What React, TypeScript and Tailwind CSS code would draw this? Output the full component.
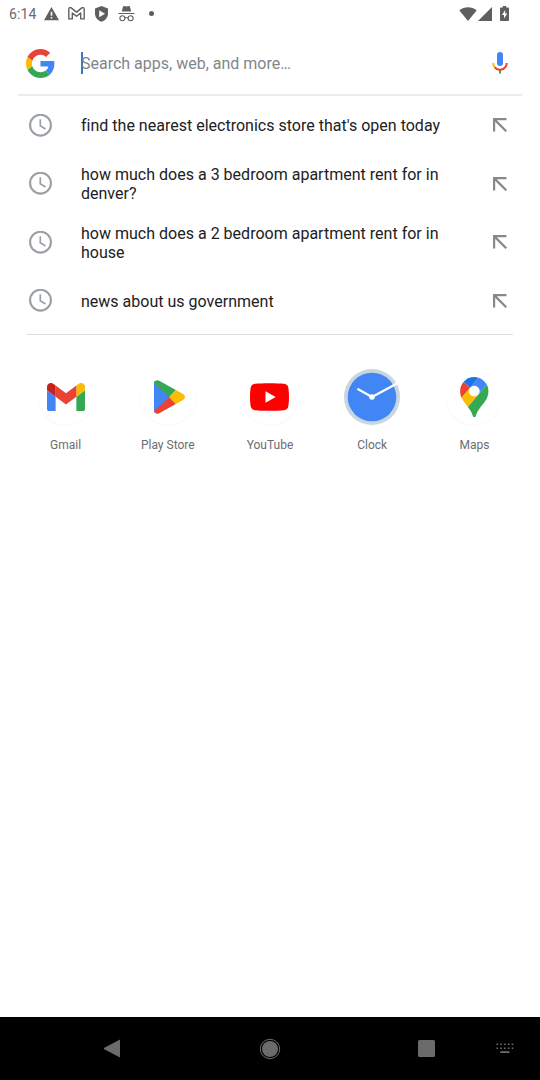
import type { ReactNode } from "react";

const suggestions = [
  "find the nearest electronics store that's open today",
  "how much does a 3 bedroom apartment rent for in denver?",
  "how much does a 2 bedroom apartment rent for in house",
  "news about us government",
];

function StatusBar() {
  return (
    <header className="flex h-[27px] shrink-0 items-center justify-between pl-[9px] pr-[30.5px] text-[#5f5f5f]">
      <div className="flex items-center">
        <span className="w-[35px] pt-px text-sm leading-[27px] tracking-[0.1px] text-[#6b6b6b]">6:14</span>
        <svg className="h-[14px] w-[15px]" viewBox="0 0 15 14" fill="currentColor">
          <path fillRule="evenodd" d="M7.5 0 15 13.2H0ZM6.7 4.8v4h1.6v-4ZM6.7 10v1.6h1.6V10Z" />
        </svg>
        <svg className="ml-[9px] h-[13px] w-[17px]" viewBox="0 0 17 13" fill="none" stroke="currentColor" strokeWidth="1.4" strokeLinejoin="round">
          <path d="M.8 11.9V2C.8.7 2.3.2 3.2.9l5.3 4.2L13.8.9c.9-.7 2.4-.2 2.4 1.1v9.9h-3.5V6L8.5 9.3 4.3 6v5.9Z" />
        </svg>
        <svg className="ml-[10px] h-[16px] w-[13px]" viewBox="0 0 13 16" fill="currentColor">
          <path fillRule="evenodd" d="M6.5 0 13 2.6v4.8c0 3.9-2.6 7-6.5 8.3C2.6 14.4 0 11.3 0 7.4V2.6ZM4.2 4.2v7L10 7.7Z" />
        </svg>
        <svg className="ml-[10px] h-[16px] w-[17px]" viewBox="0 0 17 16">
          <path fill="currentColor" d="m5.1.6 1-.5 2.4.5 2.400-.5 1 .5 1.300 4.900H3.800ZM.5 7h16v1.100H.5Z" />
          <g fill="none" stroke="currentColor" strokeWidth="1.1">
            <circle cx="4.4" cy="12.2" r="2.5" />
            <circle cx="12.6" cy="12.2" r="2.5" />
            <path d="M6.9 12c1-.7 2.2-.7 3.2 0" />
          </g>
        </svg>
        <span className="ml-[14px] size-[5px] rounded-full bg-[#5f5f5f]" />
      </div>
      <div className="flex items-center">
        <svg className="h-[14px] w-[18px]" viewBox="0 0 18 14" fill="currentColor">
          <path d="M9 14 .3 3.2C5.2-.9 12.8-.9 17.7 3.2Z" />
        </svg>
        <svg className="ml-px h-[14px] w-[14px]" viewBox="0 0 14 14" fill="currentColor">
          <path d="M14 0v14H0Z" />
        </svg>
        <svg className="ml-2 mr-px h-[15px] w-[9px]" viewBox="0 0 9 15" fill="currentColor">
          <path fillRule="evenodd" d="M2.8 0h3.4v1.4H8c.6 0 1 .4 1 1V14c0 .6-.4 1-1 1H1c-.6 0-1-.4-1-1V2.4c0-.6.4-1 1-1h1.8ZM5.2 4 2 9h2v3.5L7.2 7.4h-2Z" />
        </svg>
      </div>
    </header>
  );
}

function GoogleLogo() {
  return (
    <svg className="size-[29px]" viewBox="0 0 48 48">
      <path fill="#ea4335" d="M24 9.5c3.54 0 6.71 1.22 9.21 3.6l6.85-6.85C35.9 2.38 30.47 0 24 0 14.62 0 6.51 5.38 2.56 13.22l7.98 6.19C12.43 13.72 17.74 9.5 24 9.5z" />
      <path fill="#4285f4" d="M46.98 24.55c0-1.57-.15-3.09-.38-4.55H24v9.02h12.94c-.58 2.96-2.26 5.48-4.78 7.18l7.73 6c4.51-4.18 7.09-10.36 7.09-17.65z" />
      <path fill="#fbbc05" d="M10.53 28.59c-.48-1.45-.76-2.99-.76-4.59s.27-3.14.76-4.59l-7.98-6.19C.92 16.46 0 20.12 0 24c0 3.88.92 7.54 2.56 10.78l7.97-6.19z" />
      <path fill="#34a853" d="M24 48c6.48 0 11.93-2.13 15.89-5.81l-7.73-6c-2.15 1.45-4.92 2.3-8.16 2.3-6.26 0-11.57-4.22-13.47-9.91l-7.98 6.19C6.51 42.62 14.62 48 24 48z" />
    </svg>
  );
}

function SearchBar() {
  return (
    <div className="mx-[18px] flex h-[69px] shrink-0 items-center border-b-2 border-[#ebebeb] pl-2 pr-[14.5px] pt-[5px]">
      <GoogleLogo />
      <div className="ml-[26px] flex h-[22px] flex-1 items-center">
        <span className="-mr-[2px] h-[22px] w-[2px] bg-[#3a76c4]" />
        <span className="pt-px text-base leading-[23px] text-[#80868b]">Search apps, web, and more…</span>
      </div>
      <svg className="h-[22px] w-4" viewBox="0 0 16 22" fill="none">
        <rect x="5" y="0" width="6" height="14" rx="3" fill="#4285f4" />
        <path d="M8 17.5V21.5" stroke="#34a853" strokeWidth="2" />
        <path d="M1.2 11c0 2.1.8 3.7 2 4.9" stroke="#fbbc04" strokeWidth="2" />
        <path d="M2.8 15.5c3 3 7.4 3 10.2 0 1.2-1.2 1.8-2.7 1.8-4.5" stroke="#ea4335" strokeWidth="2" />
      </svg>
    </div>
  );
}

function Suggestion({ text }: { text: string }) {
  return (
    <li className="flex h-[58.5px] items-center pl-[29px] pr-[33.5px]">
      <svg className="size-[23px] shrink-0" viewBox="0 0 23 23" fill="none" stroke="#9aa0a6">
        <circle cx="11.5" cy="11.2" r="10.4" strokeWidth="2.1" />
        <path d="M11.3 5.2v6.6l5.2 3.1" strokeWidth="1.7" />
      </svg>
      <span className="ml-[29px] w-[375px] pt-[0.5px] text-base leading-[19px] tracking-[0.01px] text-[#202124]">{text}</span>
      <svg className="ml-auto size-[14px] shrink-0" viewBox="0 0 14 14" fill="none" stroke="#85898d" strokeWidth="2.2">
        <path d="M13.5 1.1H1.1v12.4M1.1 1.1l12.2 12.2" />
      </svg>
    </li>
  );
}

function GmailIcon() {
  return (
    <svg className="h-[28.5px] w-[38px]" viewBox="52 42 88 66">
      <path fill="#4285f4" d="M58 108h14V74L52 59v43c0 3.32 2.69 6 6 6" />
      <path fill="#34a853" d="M120 108h14c3.32 0 6-2.69 6-6V59l-20 15" />
      <path fill="#fbbc04" d="M120 48v26l20-15v-8c0-7.42-8.47-11.65-14.4-7.2" />
      <path fill="#ea4335" d="M72 74V48l24 18 24-18v26L96 92" />
      <path fill="#c5221f" d="M52 51v8l20 15V48l-5.6-4.2c-5.94-4.45-14.4-.22-14.4 7.2" />
    </svg>
  );
}

function PlayIcon() {
  return (
    <svg className="ml-[3px] h-[34px] w-[31px]" viewBox="0 0 31 35" preserveAspectRatio="none">
      <defs>
        <clipPath id="play-shape">
          <path d="M0 3.5C0 .8 2.8-.6 5.2.8L29 14.5c2.6 1.5 2.6 4.5 0 6L5.2 34.2C2.8 35.6 0 34.2 0 31.5Z" />
        </clipPath>
      </defs>
      <g clipPath="url(#play-shape)">
        <path fill="#4285f4" d="M0 0v35l17-17.5Z" />
        <path fill="#34a853" d="M0-1v4l15.5 14.5L24 8 6-3Z" />
        <path fill="#ea4335" d="M0 36v-4l15.5-14.5L24 27 6 38Z" />
        <path fill="#fbbc04" d="m22.500 9.500-7.500 8 7.500 8L34 22v-9Z" />
      </g>
    </svg>
  );
}

function YouTubeIcon() {
  return (
    <svg className="h-[28px] w-[39px]" viewBox="0 0 39 28">
      <path fill="#f00" d="M5 .8C12 0 27 0 34 .8c2.6.3 4 1.9 4.4 4.2.8 5.5.8 12.5 0 18-.4 2.3-1.8 3.9-4.4 4.2-7 .8-22 .8-29 0C2.4 26.9 1 25.3.6 23c-.8-5.5-.8-12.5 0-18C1 2.7 2.4 1.1 5 .8Z" />
      <path fill="#fff" d="M15.5 8.2v11.6L25.7 14Z" />
    </svg>
  );
}

function ClockIcon() {
  return (
    <svg className="size-[56px]" viewBox="0 0 56 56">
      <circle cx="28" cy="28" r="28" fill="#c8d6df" />
      <circle cx="28" cy="28" r="24.3" fill="#4285f4" />
      <path d="m14.2 20.2 13.8 7.8" fill="none" stroke="#fff" strokeWidth="2.2" strokeLinecap="round" />
      <path d="m28 28 24.500-13.300" fill="none" stroke="#fff" strokeWidth="2.2" />
      <circle cx="28" cy="28" r="2.8" fill="#fff" />
    </svg>
  );
}

function MapsIcon() {
  return (
    <svg className="h-[40.5px] w-[28.5px]" viewBox="0 0 92.3 132.3">
      <path fill="#1a73e8" d="M60.2 2.2C55.8.8 51 0 46.1 0 32 0 19.3 6.4 10.8 16.5l21.8 18.3L60.2 2.2z" />
      <path fill="#ea4335" d="M10.8 16.5C4.1 24.5 0 34.9 0 46.1c0 8.7 1.7 15.7 4.6 22l28-33.3-21.8-18.3z" />
      <path fill="#4285f4" d="M46.2 28.5c9.8 0 17.7 7.9 17.7 17.7 0 4.3-1.6 8.3-4.2 11.4 0 0 13.9-16.6 27.5-32.7-5.6-10.8-15.3-19-27-22.7L32.6 34.8c3.3-3.8 8.1-6.3 13.6-6.3" />
      <path fill="#fbbc04" d="M46.2 63.8c-9.8 0-17.7-7.9-17.7-17.7 0-4.3 1.5-8.3 4.1-11.3l-28 33.3c4.8 10.6 12.8 19.2 21 29.9l34.1-40.5c-3.3 3.9-8.1 6.3-13.5 6.3" />
      <path fill="#34a853" d="M59.1 109.2c15.4-24.1 33.3-35 33.3-63 0-7.7-1.9-14.9-5.2-21.3L25.6 98c2.6 3.4 5.3 7.3 7.9 11.3 9.4 14.5 6.8 23.1 12.8 23.1s3.4-8.7 12.8-23.2" />
    </svg>
  );
}

const apps: { name: string; icon: ReactNode }[] = [
  { name: "Gmail", icon: <GmailIcon /> },
  { name: "Play Store", icon: <PlayIcon /> },
  { name: "YouTube", icon: <YouTubeIcon /> },
  { name: "Clock", icon: <ClockIcon /> },
  { name: "Maps", icon: <MapsIcon /> },
];

function NavigationBar() {
  return (
    <nav className="flex h-[63px] shrink-0 items-center bg-black pl-[104px] text-[#6b6b6b]">
      <svg className="h-[19px] w-[17px]" viewBox="0 0 17 19" fill="currentColor">
        <path d="M16 .5v18L.3 10.2c-.6-.4-.6-1 0-1.4Z" />
      </svg>
      <svg className="ml-[138px] size-[22px]" viewBox="0 0 22 22">
        <circle cx="11" cy="11" r="9.7" fill="none" stroke="currentColor" strokeWidth="1" />
        <circle cx="11" cy="11" r="8" fill="currentColor" />
      </svg>
      <span className="ml-[137px] size-[17px] rounded-[1.5px] bg-[#6b6b6b]" />
      <svg className="ml-[61px] h-[11px] w-[18px]" viewBox="0 0 18 11" fill="currentColor">
        <path d="M.5.5h1.6v1.6H.5ZM4.3.5h1.6v1.6H4.3ZM8.1.5h1.6v1.6H8.1ZM11.9.5h1.6v1.6h-1.6ZM15.7.5h1.6v1.6h-1.6ZM.5 4.5h1.6v1.6H.5ZM4.3 4.5h1.6v1.6H4.3ZM8.1 4.5h1.6v1.6H8.1ZM11.9 4.5h1.6v1.6h-1.6ZM15.7 4.5h1.6v1.6h-1.6ZM4.3 8.300h9.200v1.600H4.300Z" />
      </svg>
    </nav>
  );
}

export default function App() {
  return (
    <div className="flex h-[1080px] w-[540px] flex-col overflow-hidden bg-white font-[Roboto,sans-serif]">
      <StatusBar />
      <SearchBar />
      <main className="flex-1">
        <ul>
          {suggestions.map((text) => (
            <Suggestion key={text} text={text} />
          ))}
        </ul>
        <div className="mx-[27px] mt-[4px] h-px bg-[#dadce0]" />
        <div className="mx-[14.5px] mt-[34px] grid grid-cols-5">
          {apps.map(({ name, icon }) => (
            <div key={name} className="flex flex-col items-center">
              <div className="flex size-[56px] items-center justify-center rounded-full shadow-[0_0.5px_1.5px_rgba(0,0,0,0.06)]">{icon}</div>
              <span className="mt-3 text-xs leading-4 text-[#6a6d71]">{name}</span>
            </div>
          ))}
        </div>
      </main>
      <NavigationBar />
    </div>
  );
}
